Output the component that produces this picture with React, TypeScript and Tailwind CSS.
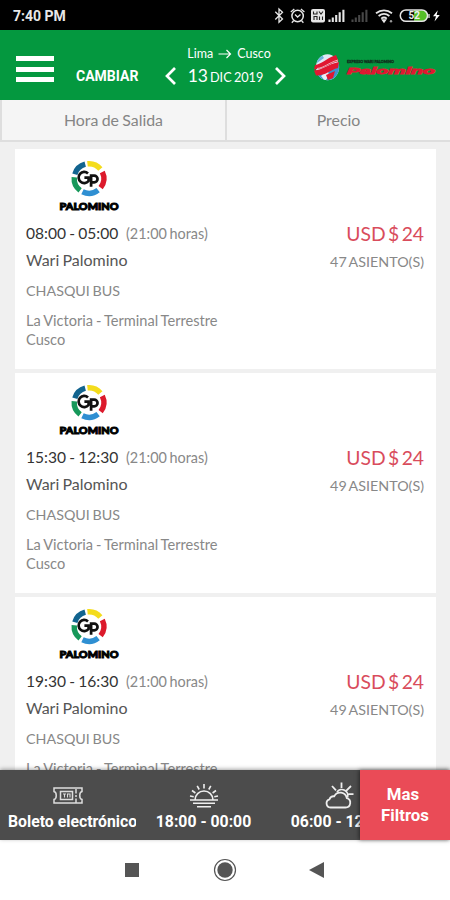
import React from "react";

const lato = "font-['Lato','Liberation_Sans',sans-serif]";
const roboto = "font-['Roboto','Liberation_Sans',sans-serif]";

const ringSegments = [
  { color: "#f4dc1c", start: -6, length: 56 },
  { color: "#dc1a2c", start: 64, length: 64 },
  { color: "#2f8fd2", start: 142, length: 64 },
  { color: "#17985a", start: 217, length: 58 },
  { color: "#12648f", start: 287, length: 58 },
];

function OperatorLogo() {
  return (
    <svg className="ml-[43px] block h-[54px] w-[62px] shrink-0" viewBox="0 0 62 54">
      {ringSegments.map((s) => (
        <circle
          key={s.color}
          cx="31"
          cy="20.5"
          r="14.8"
          fill="none"
          stroke={s.color}
          strokeWidth="5.4"
          pathLength={360}
          strokeDasharray={`${s.length} ${360 - s.length}`}
          transform={`rotate(${s.start - 90} 31 20.5)`}
        />
      ))}
      <g fill="none" stroke="#111" strokeWidth="2.7">
        <path d="M30 15.4A5.6 5.6 0 1 0 30.6 23V19.6H26.4" />
        <path d="M33.1 28.8V17.7H36.2A3.3 3.3 0 0 1 36.2 24.4H33" />
      </g>
      <text x="31" y="51.8" textAnchor="middle" textLength="59" lengthAdjust="spacingAndGlyphs" fontFamily="Lato, sans-serif" fontWeight="900" fontSize="10" fill="#000" stroke="#000" strokeWidth="1">
        PALOMINO
      </text>
    </svg>
  );
}

function BrandLogo() {
  return (
    <svg className="mt-[20px] ml-[26px] block h-[34px] w-[126px] shrink-0" viewBox="0 0 126 34">
      <defs>
        <clipPath id="globe">
          <ellipse cx="15.5" cy="17.3" rx="11.6" ry="13" />
        </clipPath>
      </defs>
      <g clipPath="url(#globe)">
        <rect width="30" height="34" fill="#dfeaf5" />
        <path d="M3 21L12 25L27 13V34H3Z" fill="#3d94cf" />
        <path d="M4 9L10 5L12 8L5 13Z" fill="#6db4df" />
        <path d="M9 26L16 21L17 26L13 31Z" fill="#e9f0f7" />
      </g>
      <path d="M3 15C10 14 13 9 24 5L26.5 11C18 13 13 19 2 19.5Z" fill="#e01831" />
      <path d="M2 20.5C11 20 16 14 27 12L26 18C18 20 13 26 4 25.5Z" fill="#e01831" />
      <path d="M5 18.5C13 17.5 16 13 26 10" fill="none" stroke="#f2d6dc" strokeWidth="0.8" />
      <path d="M14 25L23 21L21 28L16 30Z" fill="#e01831" />
      <text x="35" y="13.3" textLength="47" lengthAdjust="spacingAndGlyphs" fontFamily="Lato, sans-serif" fontWeight="900" fontSize="4" fill="#102c1c" stroke="#102c1c" strokeWidth="0.3">EXPRESO WARI PALOMINO</text>
      <text x="35" y="24.3" textLength="88" lengthAdjust="spacingAndGlyphs" fontFamily="Liberation Sans, sans-serif" fontStyle="italic" fontWeight="700" fontSize="9.6" fill="#e01831" stroke="#e01831" strokeWidth="0.9">Palomino</text>
    </svg>
  );
}

function StatusIcons() {
  return (
    <svg className="block h-[30px] w-[180px]" viewBox="270 0 180 30" fill="none" stroke="#e6e6e6" strokeWidth="1.3">
      <path d="M275.3 11.8L282.5 19L279 22.3V9L282.5 12.2L275.3 19.5" />
      <circle cx="297.6" cy="16" r="5.7" strokeWidth="1.5" />
      <path d="M290.8 12L294.3 9M304.4 12L300.9 9M293.6 20.8L291.8 22.8M301.6 20.8L303.4 22.8M295 14.5L297.6 17L300.5 14.5" />
      <rect x="311" y="9" width="14" height="13.5" rx="2" fill="#e6e6e6" stroke="none" />
      <path d="M313.5 11.5V14H317V11.5M319 11.5L321 14L323 11.5M314 20V16.5H317V20M319.5 20V16.5M322.5 16.5V20" stroke="#222" strokeWidth="1.1" />
      <path d="M329.5 22V19.5M332.8 22V17.5M336.2 22V15M339.7 22V12.2M343.4 22V9.8" strokeWidth="2.1" />
      <path d="M352.5 22V19.5M355.8 22V17.5M359.2 22V15M362.7 22V12.2M366.4 22V9.8" strokeWidth="2.1" stroke="#484848" />
      <path d="M376 13.2C380.7 9.5 387.3 9.5 392 13.2M378.6 16C382 13.3 386 13.3 389.4 16M381.2 18.6C383 17.2 385 17.2 386.8 18.6" strokeWidth="1.8" />
      <path d="M384 22.2L382.4 20H385.6Z" fill="#e6e6e6" />
      <circle cx="391" cy="21.3" r="1.2" fill="#999" stroke="none" />
      <path d="M414 10.2H422.5A5.3 5.3 0 0 1 422.5 21H414Z" fill="#55bd28" stroke="none" />
      <rect x="400.3" y="10" width="27.2" height="11.3" rx="5.6" strokeWidth="1.5" />
      <text x="408.5" y="19.4" fontFamily="Roboto, sans-serif" fontWeight="700" fontSize="10" fill="#efefef" stroke="none">52</text>
      <path d="M429 14V18" />
      <path d="M437.8 10.3L433 16.3H436L434.5 21.5L439.8 15H436.6Z" fill="#fff" stroke="none" />
    </svg>
  );
}

function Chevron({ right = false }: { right?: boolean }) {
  return (
    <svg className="block h-[18px] w-[12px]" viewBox="0 0 12 18" fill="none" stroke="#fff" strokeWidth="2.7">
      <path d={right ? "M2 1L10 9L2 17" : "M10 1L2 9L10 17"} />
    </svg>
  );
}

function Header() {
  return (
    <header className="flex h-[70px] shrink-0 bg-[#04983f] text-white">
      <div className="mt-[26px] ml-[16px] flex h-[26px] w-[38px] flex-col justify-between">
        <span className="h-[5px] bg-white" />
        <span className="h-[5px] bg-white" />
        <span className="h-[5px] bg-white" />
      </div>
      <button className={`mt-[36px] ml-[22px] h-[20px] w-[63px] text-left text-[14px] leading-[20px] font-bold whitespace-nowrap ${roboto}`}>CAMBIAR</button>
      <div className={`ml-[26px] flex w-[121px] flex-col ${lato}`}>
        <div className="mt-[16px] flex h-[16px] items-center justify-center gap-[5px] pl-[7px] text-[12.5px] leading-[16px]">
          <span>Lima</span>
          <svg className="h-[10px] w-[14px]" viewBox="0 0 14 10" fill="none" stroke="#fff" strokeWidth="1.2"><path d="M0.5 5H12.5M8.5 1L12.5 5L8.5 9" /></svg>
          <span>Cusco</span>
        </div>
        <div className="mt-[4px] flex h-[20px] items-center justify-between">
          <Chevron />
          <div className="flex items-baseline gap-[2px] whitespace-nowrap"><span className="text-[17.5px] leading-[20px]">13</span><span className="text-[12.7px] leading-[20px] [word-spacing:-1px]">DIC 2019</span></div>
          <Chevron right />
        </div>
      </div>
      <BrandLogo />
    </header>
  );
}

function TripCard({ hours, seats }: { hours: string; seats: number }) {
  return (
    <article className={`flex h-[220px] shrink-0 flex-col bg-white pt-[9px] ${lato}`}>
      <OperatorLogo />
      <div className="mt-[12px] flex justify-between pr-[12px] pl-[11px]">
        <div className="whitespace-nowrap">
          <div className="flex h-[20px] items-center text-[15.6px] text-[#333]"><span className="w-[100px] [word-spacing:-0.8px]">{hours}</span><span className="text-[14.4px] text-[#888] [word-spacing:-1px]">(21:00 horas)</span></div>
          <div className="mt-[6px] h-[20px] text-[16px] leading-[20px] text-[#555] [word-spacing:-1px]">Wari Palomino</div>
          <div className="mt-[11px] h-[20px] text-[14.3px] leading-[20px] text-[#888] [word-spacing:-1px]">CHASQUI BUS</div>
          <div className="mt-[10px] text-[14.6px] leading-[19px] text-[#888] [word-spacing:-0.8px]">La Victoria - Terminal Terrestre<br />Cusco</div>
        </div>
        <div className="text-right whitespace-nowrap">
          <div className="h-[20px] text-[19.3px] leading-[20px] text-[#d94c5c] [word-spacing:-2.5px]">USD $ 24</div>
          <div className="mt-[8px] h-[20px] text-[14.3px] leading-[20px] text-[#888] [word-spacing:-1.3px]">{seats} ASIENTO(S)</div>
        </div>
      </div>
    </article>
  );
}

function TicketIcon() {
  return (
    <svg className="block h-[17px] w-[30px]" viewBox="0 0 30 17" fill="none" stroke="#ddd" strokeWidth="1.5">
      <path d="M1 1H29V4.5C26 5 26 12 29 12.5V16H1V12.5C4 12 4 5 1 4.5Z" />
      <path d="M7.5 4.5H19.5V12.5H7.5ZM23 2V6.5M23 8V10M23 11.5V16" />
      <path d="M10 7H13M11.5 7V10.5M14.5 10.5V7H17V10.5" strokeWidth="1.1" />
    </svg>
  );
}

function SunsetIcon() {
  return (
    <svg className="block h-[25px] w-[30px]" viewBox="0 0 30 25" fill="none" stroke="#eee" strokeWidth="1.6">
      <path d="M1 17H29M4 20.3H26M8 23.7H22M6 17A9 9 0 0 1 24 17M15 1V5.5M8.2 2.8L10.2 6.5M21.8 2.8L19.8 6.5M3 7.5L6.4 10M27 7.5L23.6 10M1 13L4.7 13.8M29 13L25.3 13.8" />
    </svg>
  );
}

function CloudSunIcon() {
  return (
    <svg className="block h-[27px] w-[30px]" viewBox="0 0 30 27" fill="none" stroke="#eee" strokeWidth="1.8">
      <path d="M6.5 25.5H21.5A4.8 4.8 0 0 0 22.8 16.1A6.7 6.7 0 0 0 10.2 14.3A4.5 4.5 0 0 0 5.5 17.3A4.2 4.2 0 0 0 6.5 25.5Z" />
      <path d="M13 10A6 6 0 0 1 23.5 15.5M17.5 0.5V6M8 4L12 8.3M27 4L22.4 8.6M24.5 12.2H29.5" />
    </svg>
  );
}

function FilterBar() {
  const label = "h-[20px] text-[15.8px] leading-[21px] font-bold whitespace-nowrap";
  return (
    <div className={`relative z-10 flex h-[70px] shrink-0 bg-[#4c4c4c] text-white shadow-[0_-1px_4px_rgba(0,0,0,0.35)] ${roboto}`}>
      <div className="flex w-[360px] shrink-0 overflow-hidden">
        <div className="flex w-[136px] shrink-0 flex-col items-center"><div className="flex h-[41px] items-end pb-[7px]"><TicketIcon /></div><span className={label + " w-[128px] self-end overflow-hidden"}>Boleto electrónico</span></div>
        <div className="flex w-[135px] shrink-0 flex-col items-center"><div className="flex h-[41px] items-end pb-[3px]"><SunsetIcon /></div><span className={label}>18:00 - 00:00</span></div>
        <div className="flex w-[135px] shrink-0 flex-col items-center"><div className="flex h-[41px] items-end pb-[2px]"><CloudSunIcon /></div><span className={label}>06:00 - 12:00</span></div>
      </div>
      <button className="w-[90px] bg-[#ea4b57] text-center text-[16.8px] leading-[21px] font-bold shadow-[-1px_0_4px_rgba(0,0,0,0.5)]"><span className="block pr-[4px]">Mas</span>Filtros</button>
    </div>
  );
}

export default function App() {
  return (
    <div className="flex h-[900px] w-[450px] flex-col overflow-hidden bg-[#f0f0f0]">
      <div className={`flex h-[30px] shrink-0 items-center justify-between bg-black pl-[13px] text-[14px] font-bold text-[#e8e8e8] ${roboto}`}>
        <span className="pt-[2px]">7:40 PM</span>
        <StatusIcons />
      </div>
      <Header />
      <div className={`flex h-[42px] shrink-0 border-b-[2px] border-[#dedede] bg-[#f5f5f5] text-[15.9px] text-[#858585] [word-spacing:-0.8px] ${lato}`}>
        <div className="flex w-[225px] items-center justify-center border-l-[2px] border-[#dedede]">Hora de Salida</div>
        <div className="flex flex-1 items-center justify-center border-l-[2px] border-[#dedede]">Precio</div>
      </div>
      <main className="flex min-h-0 flex-1 flex-col gap-[4px] overflow-hidden pt-[7px] pr-[14px] pl-[15px]">
        <TripCard hours="08:00 - 05:00" seats={47} />
        <TripCard hours="15:30 - 12:30" seats={49} />
        <TripCard hours="19:30 - 16:30" seats={49} />
      </main>
      <FilterBar />
      <nav className="flex h-[60px] shrink-0 items-center bg-white pl-[125px]">
        <span className="h-[14px] w-[14px] bg-[#555]" />
        <svg className="ml-[74px] h-[24px] w-[24px]" viewBox="0 0 24 24"><circle cx="12" cy="12" r="10.5" fill="none" stroke="#555" strokeWidth="1.2" /><circle cx="12" cy="12" r="7.7" fill="#555" /></svg>
        <svg className="ml-[72px] h-[16px] w-[15px]" viewBox="0 0 15 16"><path d="M0 8L15 0V16Z" fill="#555" /></svg>
      </nav>
    </div>
  );
}
